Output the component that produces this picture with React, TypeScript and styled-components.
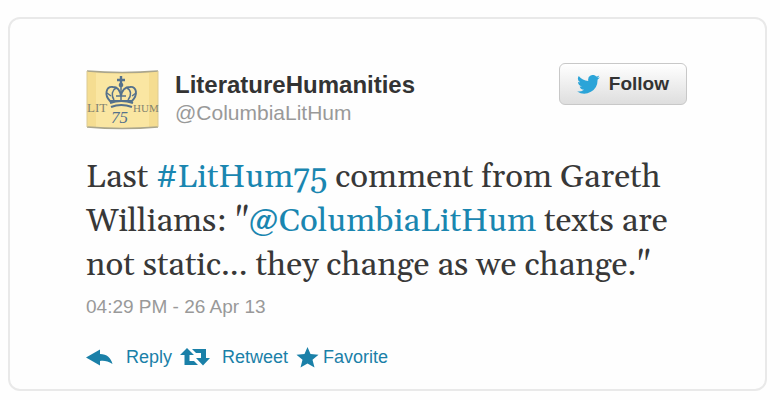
import React from 'react';
import styled, { createGlobalStyle } from 'styled-components';

const GlobalStyle = createGlobalStyle`
  *, *::before, *::after { box-sizing: border-box; }
  body { margin: 0; background: #fefefe; font-family: "Helvetica Neue", "Liberation Sans", Arial, sans-serif; }
`;

const Page = styled.main`
  padding: 17px 13px 10px 8px;
`;

const Card = styled.article`
  padding: 44px 78px 20px 76px;
  border: 2px solid #e9e9e9;
  border-radius: 12px;
  background: #fefefe;
`;

const Header = styled.header`
  display: flex;
  align-items: flex-start;
  justify-content: space-between;
`;

const Author = styled.a`
  display: flex;
  gap: 16px;
  text-decoration: none;
`;

const Avatar = styled.svg`
  display: block;
  width: 73px;
  height: 73px;
  flex: none;
`;

const Names = styled.span`
  display: flex;
  flex-direction: column;
  padding-top: 8px;
`;

const FullName = styled.strong`
  font-size: 24px;
  line-height: 28px;
  color: #333;
`;

const Handle = styled.span`
  font-size: 21px;
  line-height: 28px;
  color: #999;
`;

const FollowButton = styled.button`
  display: flex;
  align-items: center;
  gap: 9px;
  height: 42px;
  padding: 0 17px;
  border: 1px solid #c8c8c8;
  border-radius: 6px;
  background: linear-gradient(#fff, #dedede);
  color: #333;
  font: bold 19px/24px "Helvetica Neue", "Liberation Sans", Arial, sans-serif;
  cursor: pointer;
`;

const Message = styled.p`
  margin: 19px 0 0;
  font-family: Georgia, Gelasio, "Liberation Serif", serif;
  font-size: 33px;
  line-height: 44px;
  color: #383838;
`;

const TextLink = styled.a`
  color: #1a86b0;
  text-decoration: none;
`;

const Timestamp = styled.time`
  display: block;
  margin-top: 8px;
  font-size: 19px;
  line-height: 24px;
  color: #999;
`;

const Actions = styled.div`
  display: flex;
  align-items: center;
  gap: 8px;
  margin-top: 26px;
`;

const ActionButton = styled.button<{ $gap: number }>`
  display: flex;
  align-items: center;
  gap: ${({ $gap }) => $gap}px;
  padding: 0;
  border: 0;
  background: none;
  color: #1a80a8;
  font: 18px/24px "Helvetica Neue", "Liberation Sans", Arial, sans-serif;
  cursor: pointer;
`;

const AvatarPicture = () => (
  <Avatar viewBox="0 0 73 73" role="img" aria-label="Lit Hum 75">
    <path d="M1 8Q36 11 72 8V64Q36 67 1 64Z" fill="#f5dd91" />
    <path d="M10 10Q36 12 63 10V64Q36 66 10 64Z" fill="#fae6a2" />
    <path d="M1 8Q36 11 72 8M1 64Q36 67 72 64" fill="none" stroke="#aaa68e" strokeWidth="1.3" />
    <path d="M1 8V64M72 8V64" stroke="#dccb94" />
    <g fill="none" stroke="#55718c" strokeWidth="1.900" transform="translate(-1 0)">
      <path d="M36 13V21M32 17H40" strokeWidth="2.4" />
      <path d="M25 38C19 32 21 23 28 24C33 24 35 27 36 33C37 27 40 24 45 24C52 23 53 32 47 38Z" />
      <path d="M29 37C26 32 27 27 31 25M43 37C47 32 46 27 42 25M36 24V38" strokeWidth="1.5" />
      <path d="M25 40Q36 36 48 40M26 44Q36 40 47 44" strokeWidth="2.2" />
      <path d="M22 30L26 33M51 30L47 33M31 33H41" strokeWidth="1.4" />
    </g>
    <circle cx="35" cy="22" r="2.3" fill="#55718c" />
    <g fill="#83836f" fontFamily="Liberation Serif, serif">
      <text x="1" y="49" fontSize="13">LIT</text>
      <text x="47" y="49" fontSize="11">HUM</text>
    </g>
    <text x="25" y="60" fill="#55718c" fontFamily="Liberation Serif, serif" fontStyle="italic" fontSize="17">75</text>
  </Avatar>
);

const BirdIcon = () => (
  <svg width="23" height="19" viewBox="0 0 24 20" fill="#2ba4d8" aria-hidden="true">
    <path d="M24 2.4a9.8 9.8 0 0 1-2.8.8A5 5 0 0 0 23.3.5a9.8 9.8 0 0 1-3.1 1.2A4.9 4.9 0 0 0 11.8 6.2 14 14 0 0 1 1.7 1a4.900 4.900 0 0 0 1.500 6.600 4.900 4.900 0 0 1-2.200-.6 4.900 4.900 0 0 0 3.900 4.900 5 5 0 0 1-2.200.1 4.900 4.900 0 0 0 4.600 3.400A9.900 9.900 0 0 1 0 17.400a14 14 0 0 0 21.500-12.400A10 10 0 0 0 24 2.400Z" />
  </svg>
);

const ReplyIcon = () => (
  <svg width="27" height="17" viewBox="0 0 27 17" fill="#1a80a8" aria-hidden="true">
    <path d="M0 8.500L14 .5V5C21 5 25 9 26.500 15C22 12 18 11.500 14 12V16.500Z" />
  </svg>
);

const RetweetIcon = () => (
  <svg width="30" height="18" viewBox="0 0 30 18" fill="#1a80a8" aria-hidden="true">
    <path d="M7 0L14 7H9.500V13H14L18 17H4.500V7H0ZM12 1H26V10H30L23 17.500L16 10H21V5H16Z" />
  </svg>
);

const StarIcon = () => (
  <svg width="23" height="21" viewBox="0 0 23 21" fill="#1a80a8" aria-hidden="true">
    <path d="M11.500 0L14.500 7L22.500 7.700L16.500 12.800L18.500 20.500L11.500 16.500L4.500 20.500L6.500 12.800L.5 7.700L8.500 7Z" />
  </svg>
);

const actions = [
  { label: 'Reply', icon: <ReplyIcon />, gap: 13 },
  { label: 'Retweet', icon: <RetweetIcon />, gap: 12 },
  { label: 'Favorite', icon: <StarIcon />, gap: 4 },
];

export default function App() {
  return (
    <>
      <GlobalStyle />
      <Page>
        <Card>
          <Header>
            <Author href="#profile">
              <AvatarPicture />
              <Names>
                <FullName>LiteratureHumanities</FullName>
                <Handle>@ColumbiaLitHum</Handle>
              </Names>
            </Author>
            <FollowButton type="button">
              <BirdIcon />
              Follow
            </FollowButton>
          </Header>
          <Message>
            Last <TextLink href="#LitHum75">#LitHum75</TextLink> comment from Gareth Williams: "
            <TextLink href="#ColumbiaLitHum">@ColumbiaLitHum</TextLink> texts are not static... they change as we change."
          </Message>
          <Timestamp dateTime="2013-04-26T16:29">04:29 PM - 26 Apr 13</Timestamp>
          <Actions>
            {actions.map(({ label, icon, gap }) => (
              <ActionButton key={label} type="button" $gap={gap}>
                {icon}
                {label}
              </ActionButton>
            ))}
          </Actions>
        </Card>
      </Page>
    </>
  );
}
